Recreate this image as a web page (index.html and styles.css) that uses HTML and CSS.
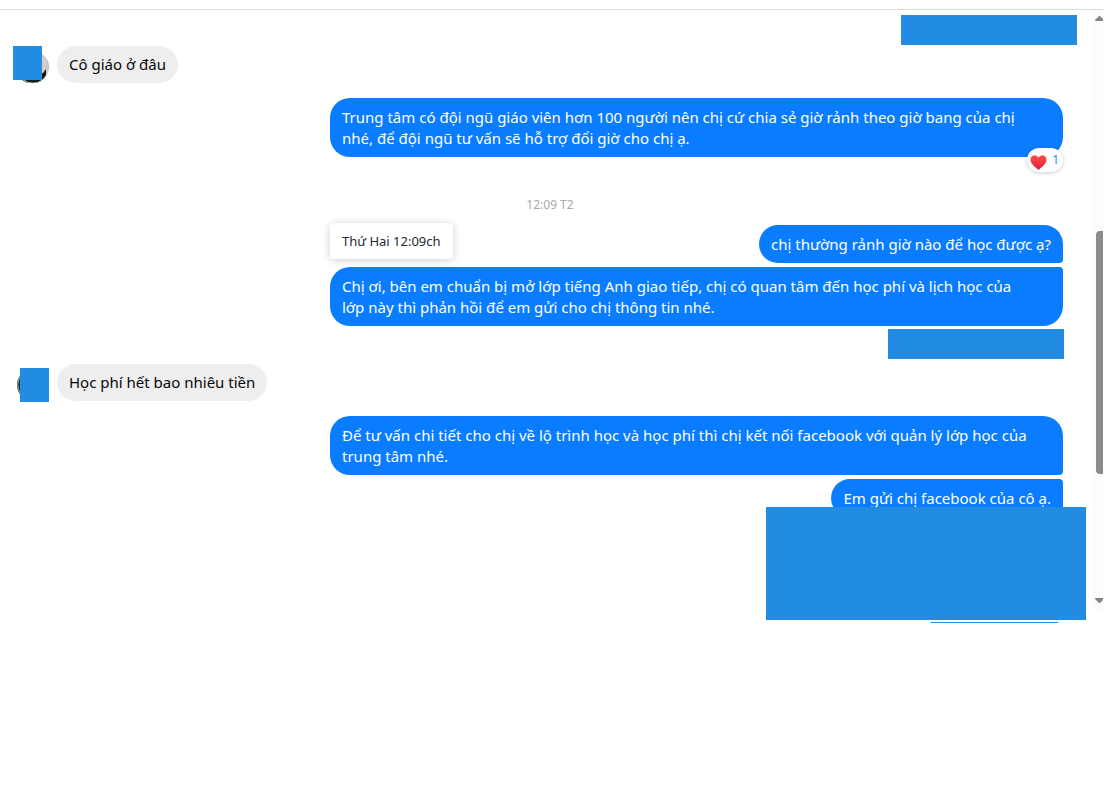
FILE: index.html
```html
<!DOCTYPE html>
<html lang="vi">
<head>
<meta charset="utf-8">
<meta name="viewport" content="width=device-width, initial-scale=1">
<title>Chat</title>
<link rel="stylesheet" href="styles.css">
</head>
<body>
<main class="chat">
  <section class="thread">
    <div class="cover cover-small cover-wide"></div>
    <div class="incoming">
      <div class="avatar">
        <svg class="face" viewBox="0 0 32 32" aria-hidden="true"><circle cx="16" cy="16" r="16" fill="#d3cccc"/><path d="M2 24h18l6-2 3-4v6l-2 3a16 16 0 0 1-24 0z" fill="#17191b"/><path d="M6 28.500a16 16 0 0 0 19 1M30 9a16 16 0 0 1 1 10" fill="none" stroke="#9fc9c3"/></svg>
        <span class="mask mask-left"></span>
      </div>
      <p class="bubble">Cô giáo ở đâu</p>
    </div>
    <div class="outgoing">
      <p class="bubble long">Trung tâm có đội ngũ giáo viên hơn 100 người nên chị cứ chia sẻ giờ rảnh theo giờ bang của chị nhé, để đội ngũ tư vấn sẽ hỗ trợ đổi giờ cho chị ạ.</p>
      <button class="reaction" type="button">
        <svg class="heart" viewBox="0 0 18 17" aria-hidden="true"><defs><linearGradient id="red" x2="0" y2="1"><stop stop-color="#ff5149"/><stop offset="1" stop-color="#da1f35"/></linearGradient></defs><path d="M9 16.500C6 13.500.5 10 .5 5.300.5 2.500 2.600.7 4.900.7 6.700.7 8.200 1.700 9 3.200 9.800 1.700 11.300.7 13.100.7c2.300 0 4.400 1.800 4.400 4.600C17.500 10 12 13.500 9 16.500z" fill="url(#red)"/></svg>
        <span>1</span>
      </button>
    </div>
    <time class="stamp">12:09 T2</time>
    <div class="outgoing">
      <span class="tooltip" role="tooltip">Thứ Hai 12:09ch</span>
      <p class="bubble first">chị thường rảnh giờ nào để học được ạ?</p>
      <p class="bubble long last">Chị ơi, bên em chuẩn bị mở lớp tiếng Anh giao tiếp, chị có quan tâm đến học phí và lịch học của lớp này thì phản hồi để em gửi cho chị thông tin nhé.</p>
    </div>
    <div class="cover cover-small"></div>
    <div class="incoming">
      <div class="avatar">
        <svg class="face" viewBox="0 0 32 32" aria-hidden="true"><circle cx="16" cy="16" r="16" fill="#363334"/><path d="M3 8a16 16 0 0 0 0 16" fill="none" stroke="#78b8b0"/></svg>
        <span class="mask mask-right"></span>
      </div>
      <p class="bubble">Học phí hết bao nhiêu tiền</p>
    </div>
    <div class="outgoing">
      <p class="bubble long first">Để tư vấn chi tiết cho chị về lộ trình học và học phí thì chị kết nối facebook với quản lý lớp học của trung tâm nhé.</p>
      <p class="bubble middle">Em gửi chị facebook của cô ạ.</p>
    </div>
    <div class="cover cover-large"></div>
    <div class="edge"></div>
  </section>
  <div class="scrollbar" aria-hidden="true">
    <svg class="arrow" viewBox="0 0 8 5"><path d="M0 5V4l4-4h1l3 3v2z" fill="#858585"/></svg>
    <span class="thumb"></span>
    <svg class="arrow" viewBox="0 0 8 5"><path d="M0 0h8v2L5 5H4L0 1z" fill="#858585"/></svg>
  </div>
</main>
</body>
</html>
```
FILE: styles.css
```css
* { box-sizing: border-box; }

body {
  margin: 0;
  padding: 9px 6px 0 0;
  background: #fff;
  color: #080809;
  font: 15px/21px "Noto Sans", "Open Sans", sans-serif;
}

p { margin: 0; }

.chat {
  display: flex;
  border-top: 1px solid #dcdcdc;
}

.thread {
  flex: 1;
  min-width: 0;
  display: flex;
  flex-direction: column;
  padding: 5px 30px 0 13px;
}

.cover {
  align-self: flex-end;
  background: #228be2;
}

.cover-small {
  width: 176px;
  height: 30px;
  margin-right: -1px;
}

.cover-wide { margin-right: -14px; }

.cover-large {
  z-index: 1;
  width: 320px;
  height: 113px;
  margin: -10px -23px 0 0;
}

.edge {
  align-self: flex-end;
  width: 127px;
  height: 1px;
  margin: 2px 5px 0 0;
  background: #228be2;
}

.incoming {
  display: flex;
  gap: 8px;
}

.incoming .bubble {
  padding: 8px 12px;
  border-radius: 19px;
  background: #eee;
}

.cover + .incoming { margin-top: 1px; }
.cover-small:not(.cover-wide) + .incoming { margin-top: 5px; }

.avatar {
  position: relative;
  width: 36px;
  height: 37px;
}

.face {
  position: absolute;
  right: 0;
  bottom: 0;
  width: 32px;
  height: 32px;
}

.mask {
  position: absolute;
  top: 0;
  width: 29px;
  height: 34px;
  background: #228be2;
}

.mask-left { left: 0; }
.mask-right { right: 0; top: 4px; }

.outgoing {
  position: relative;
  align-self: flex-end;
  display: flex;
  flex-direction: column;
  align-items: flex-end;
  gap: 4px;
  width: calc(70% - 2px);
}

.incoming + .outgoing { margin-top: 15px; }

.outgoing .bubble {
  padding: 9px 12px 8px;
  border-radius: 20px;
  background: #0a7cff;
  color: #fff;
}

.outgoing .long { padding-right: 28px; }
.outgoing .first { border-bottom-right-radius: 4px; }
.outgoing .last { border-top-right-radius: 4px; }
.outgoing .middle { border-top-right-radius: 4px; border-bottom-right-radius: 4px; }
.outgoing + .cover-small { margin-top: 3px; }

.reaction {
  position: absolute;
  right: 0;
  bottom: -15px;
  display: flex;
  align-items: center;
  gap: 5px;
  height: 24px;
  padding: 0 4px 0 3px;
  border: 0;
  border-radius: 12px;
  background: #fff;
  box-shadow: 0 1px 4px #0003;
  color: #3984e8;
  font: 12px/16px "Noto Sans", "Open Sans", sans-serif;
}

.heart {
  width: 17px;
  height: 17px;
  margin-top: 4px;
}

.stamp {
  align-self: center;
  margin: 40px 0 12px;
  padding-left: 24px;
  color: #aaa;
  font-size: 12px;
  line-height: 16px;
}

.tooltip {
  position: absolute;
  left: 0;
  top: -2px;
  padding: 8px 12px;
  border-radius: 4px;
  background: #fff;
  box-shadow: 0 1px 8px #0003;
  color: #1c2b33;
  font-size: 13px;
  line-height: 20px;
}

.scrollbar {
  width: 10px;
  display: flex;
  flex-direction: column;
  align-items: flex-end;
  padding: 6px 0 20px;
  background: linear-gradient(#fcfcfc, #fcfcfc) top / 100% calc(100% - 13px) no-repeat;
}

.arrow {
  width: 8px;
  height: 5px;
}

.thumb {
  width: 7px;
  height: 243px;
  margin: 210px 0 auto;
  border-radius: 4px 0 0 4px;
  background: #8b8b8b;
}
```
